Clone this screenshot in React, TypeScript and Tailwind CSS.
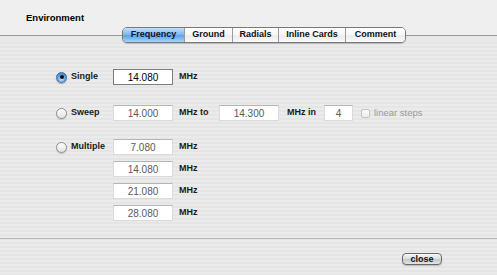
import React from "react";

const font = { fontFamily: '"Liberation Sans", Arial, sans-serif' };

function Radio({ checked }: { checked?: boolean }) {
  if (checked) {
    return (
      <span className="flex h-[11px] w-[11px] items-center justify-center rounded-full border border-[#3d6aa6] bg-[radial-gradient(circle_at_50%_70%,#bfe0ff_0%,#5d9de6_55%,#2f6fc4_100%)] shadow-[0_1px_1px_rgba(0,0,0,0.25)]">
        <span className="h-[4px] w-[4px] rounded-full bg-[#101010]" />
      </span>
    );
  }
  return (
    <span className="h-[11px] w-[11px] rounded-full border border-[#8c8c8c] bg-[linear-gradient(#ffffff,#e2e2e2)] shadow-[0_1px_1px_rgba(0,0,0,0.15)]" />
  );
}

function Field({ value, w = "w-[60px]", active }: { value: string; w?: string; active?: boolean }) {
  return (
    <div
      className={`flex h-[16px] ${w} items-center justify-center bg-white text-[10px] font-normal ${
        active
          ? "border border-[#7c7c7c] text-black"
          : "border border-[#dadada] border-t-[#b5b5b5] text-[#5a5a5a]"
      }`}
    >
      {value}
    </div>
  );
}

const tabs = ["Frequency", "Ground", "Radials", "Inline Cards", "Comment"];
const tabWidths = ["w-[61px]", "w-[48px]", "w-[46px]", "w-[67px]", "w-[60px]"];

export default function App() {
  return (
    <div
      style={font}
      className="flex h-[275px] w-[497px] flex-col overflow-hidden bg-[repeating-linear-gradient(#ebebeb_0px,#ebebeb_2px,#e5e5e5_2px,#e5e5e5_4px)] text-[#1a1a1a]"
    >
      {/* header + tab bar */}
      <div className="bg-[linear-gradient(#efefef_0px,#efefef_35px,#e8e8e8_36px)]">
        <div className="pb-[3px] pl-[26px] pt-[12px] text-[9.5px] font-bold leading-[12px] text-black">Environment</div>
        <div className="flex h-[16px] items-center">
          <div className="h-px w-[122px] bg-[#9a9a9a]" />
          <div className="flex h-[16px] overflow-hidden rounded-[5px] border border-[#787878] shadow-[0_1px_1px_rgba(0,0,0,0.2)]">
            {tabs.map((t, i) => (
              <div
                key={t}
                className={`flex h-full ${tabWidths[i]} items-center justify-center text-[9px] font-bold ${
                  i > 0 ? "border-l border-[#9a9a9a]" : ""
                } ${
                  i === 0
                    ? "bg-[linear-gradient(#c4e1fb,#78b3ef_50%,#5ea2ea_55%,#a6d3fb)] text-[#0b1633]"
                    : "bg-[linear-gradient(#ffffff,#f6f6f6_50%,#ececec_55%,#fafafa)] text-[#111]"
                }`}
              >
                {t}
              </div>
            ))}
          </div>
          <div className="h-px flex-1 bg-[#9a9a9a]" />
        </div>
      </div>

      {/* body */}
      <div className="flex flex-1 flex-col pl-[56px] text-[9px] font-bold">
        <div className="mt-[26px] flex items-center">
          <div className="flex w-[57px] items-center gap-[4px]">
            <Radio checked />
            <span>Single</span>
          </div>
          <Field value="14.080" active />
          <span className="ml-[6px]">MHz</span>
        </div>

        <div className="mt-[20px] flex items-center">
          <div className="flex w-[57px] items-center gap-[4px]">
            <Radio />
            <span>Sweep</span>
          </div>
          <Field value="14.000" />
          <span className="ml-[6px] w-[40px]">MHz to</span>
          <Field value="14.300" />
          <span className="ml-[8px] w-[37px]">MHz in</span>
          <Field value="4" w="w-[29px]" />
          <span className="ml-[8px] h-[9px] w-[9px] rounded-[2px] border border-[#c4c4c4] bg-[linear-gradient(#fdfdfd,#ececec)]" />
          <span className="ml-[4px] text-[9.5px] font-normal text-[#9a9a9a]">linear steps</span>
        </div>

        <div className="mt-[18px] flex items-start">
          <div className="flex h-[16px] w-[57px] items-center gap-[4px]">
            <Radio />
            <span>Multiple</span>
          </div>
          <div className="flex flex-col gap-[6px]">
            {["7.080", "14.080", "21.080", "28.080"].map((v) => (
              <div key={v} className="flex items-center">
                <Field value={v} />
                <span className="ml-[6px]">MHz</span>
              </div>
            ))}
          </div>
        </div>
      </div>

      {/* footer */}
      <div className="flex h-[37px] items-start justify-end border-t border-[#b4b4b4] pr-[55px] pt-[14px]">
        <button className="flex h-[12px] w-[40px] items-center justify-center rounded-[4px] border border-[#6a6a6a] bg-[linear-gradient(#f8f8f8,#dcdcdc_50%,#c9c9c9_55%,#e4e4e4)] text-[9px] font-bold leading-none text-[#111] shadow-[0_1px_1px_rgba(0,0,0,0.2)]">
          close
        </button>
      </div>
    </div>
  );
}
